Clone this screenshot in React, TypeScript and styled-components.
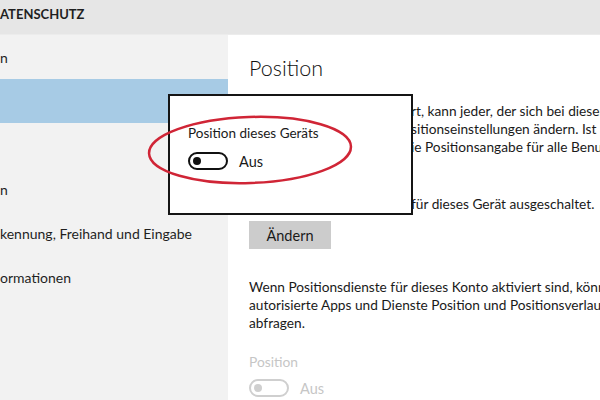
import styled, { createGlobalStyle } from "styled-components";

const GlobalStyle = createGlobalStyle`
  html, body {
    margin: 0;
    padding: 0;
    background: #ffffff;
  }
  * {
    box-sizing: border-box;
  }
`;

const Page = styled.div`
  position: relative;
  width: 600px;
  height: 400px;
  overflow: hidden;
  display: flex;
  flex-direction: column;
  font-family: Lato, "Open Sans", sans-serif;
  color: #1a1a1a;
  background: #ffffff;
`;

const Header = styled.div`
  height: 35px;
  flex-shrink: 0;
  background: #e6e6e6;
  border-bottom: 1px solid #ececec;
  display: flex;
  align-items: flex-start;
  padding-top: 6px;
  font-size: 13px;
  font-weight: 700;
  color: #1f1f1f;
`;

const Body = styled.div`
  flex: 1;
  display: flex;
  min-height: 0;
`;

const Sidebar = styled.div`
  width: 228px;
  flex-shrink: 0;
  background: #f2f2f2;
  display: flex;
  flex-direction: column;
`;

const NavItem = styled.div<{ $selected?: boolean }>`
  height: 44px;
  display: flex;
  align-items: center;
  font-size: 14px;
  white-space: nowrap;
  color: #1f1f1f;
  background: ${(p) => (p.$selected ? "#a7cbe5" : "transparent")};
`;

const Content = styled.div`
  flex: 1;
  min-width: 0;
  overflow: hidden;
  padding: 18px 0 0 21px;
  display: flex;
  flex-direction: column;
  align-items: flex-start;
`;

const Title = styled.h1`
  margin: 0;
  font-size: 21.5px;
  line-height: 30px;
  font-weight: 300;
  color: #111111;
`;

const Paragraph = styled.div<{ $gap: number }>`
  margin-top: ${(p) => p.$gap}px;
  font-size: 13.7px;
  line-height: 18px;
  white-space: nowrap;
  color: #1a1a1a;
`;

const Line = styled.div``;

/* start of a line that sits under the callout box */
const Covered = styled.span`
  display: inline-block;
  width: 162px;
  overflow: hidden;
  vertical-align: top;
`;

const Button = styled.button`
  margin-top: 8px;
  width: 82px;
  height: 28px;
  border: none;
  background: #cccccc;
  font-family: inherit;
  font-size: 14.5px;
  color: #1a1a1a;
  padding: 0;
`;

const Label = styled.div<{ $disabled?: boolean }>`
  margin-top: 21px;
  font-size: 13.8px;
  line-height: 18px;
  color: ${(p) => (p.$disabled ? "#c6c6c6" : "#1a1a1a")};
`;

const ToggleRow = styled.div<{ $gap: number }>`
  margin-top: ${(p) => p.$gap}px;
  display: flex;
  align-items: center;
  gap: 11px;
`;

const Toggle = styled.div<{ $disabled?: boolean }>`
  width: 40px;
  height: 18px;
  border-radius: 9px;
  border: 2px solid ${(p) => (p.$disabled ? "#cfcfcf" : "#111111")};
  display: flex;
  align-items: center;
  padding-left: 3px;

  &::before {
    content: "";
    width: 8px;
    height: 8px;
    border-radius: 50%;
    background: ${(p) => (p.$disabled ? "#cfcfcf" : "#111111")};
  }
`;

const ToggleText = styled.span<{ $disabled?: boolean }>`
  font-size: 14.5px;
  color: ${(p) => (p.$disabled ? "#c6c6c6" : "#1a1a1a")};
`;

/* the zoomed-in callout that lies over the page */
const Callout = styled.div`
  position: absolute;
  left: 168px;
  top: 94px;
  width: 245px;
  height: 121px;
  background: #ffffff;
  border: 2px solid #151515;
  padding: 28px 0 0 18px;
  display: flex;
  flex-direction: column;
`;

const CalloutLabel = styled.div`
  font-size: 13.5px;
  line-height: 18px;
  color: #1a1a1a;
`;

const Marker = styled.svg`
  position: absolute;
  left: 0;
  top: 0;
  pointer-events: none;
`;

export default function App() {
  return (
    <>
      <GlobalStyle />
      <Page>
        <Header>ATENSCHUTZ</Header>
        <Body>
          <Sidebar>
            <NavItem>n</NavItem>
            <NavItem $selected />
            <NavItem />
            <NavItem>n</NavItem>
            <NavItem>kennung, Freihand und Eingabe</NavItem>
            <NavItem>ormationen</NavItem>
            <NavItem />
            <NavItem />
          </Sidebar>
          <Content>
            <Title>Position</Title>
            <Paragraph $gap={19}>
              <Line>
                <Covered>Wenn diese Option aktivie</Covered>rt, kann jeder, der sich bei diesem Gerät anmeldet,
              </Line>
              <Line>
                <Covered>seine eigenen Po</Covered>sitionseinstellungen ändern. Ist sie deaktiviert,
              </Line>
              <Line>
                <Covered>ist d</Covered>ie Positionsangabe für alle Benutzer deaktiviert.
              </Line>
            </Paragraph>
            <Paragraph $gap={39}>
              <Line>
                <Covered>Die Position ist </Covered>für dieses Gerät ausgeschaltet.
              </Line>
            </Paragraph>
            <Button>Ändern</Button>
            <Paragraph $gap={29}>
              <Line>Wenn Positionsdienste für dieses Konto aktiviert sind, können nur</Line>
              <Line>autorisierte Apps und Dienste Position und Positionsverlauf</Line>
              <Line>abfragen.</Line>
            </Paragraph>
            <Label $disabled>Position</Label>
            <ToggleRow $gap={8}>
              <Toggle $disabled />
              <ToggleText $disabled>Aus</ToggleText>
            </ToggleRow>
          </Content>
        </Body>

        <Callout>
          <CalloutLabel>Position dieses Geräts</CalloutLabel>
          <ToggleRow $gap={10}>
            <Toggle />
            <ToggleText>Aus</ToggleText>
          </ToggleRow>
        </Callout>

        <Marker width="600" height="400" viewBox="0 0 600 400">
          <ellipse
            cx="250"
            cy="150"
            rx="101"
            ry="33"
            fill="none"
            stroke="#d02536"
            strokeWidth="2.5"
            transform="rotate(-2 250 150)"
          />
        </Marker>
      </Page>
    </>
  );
}
